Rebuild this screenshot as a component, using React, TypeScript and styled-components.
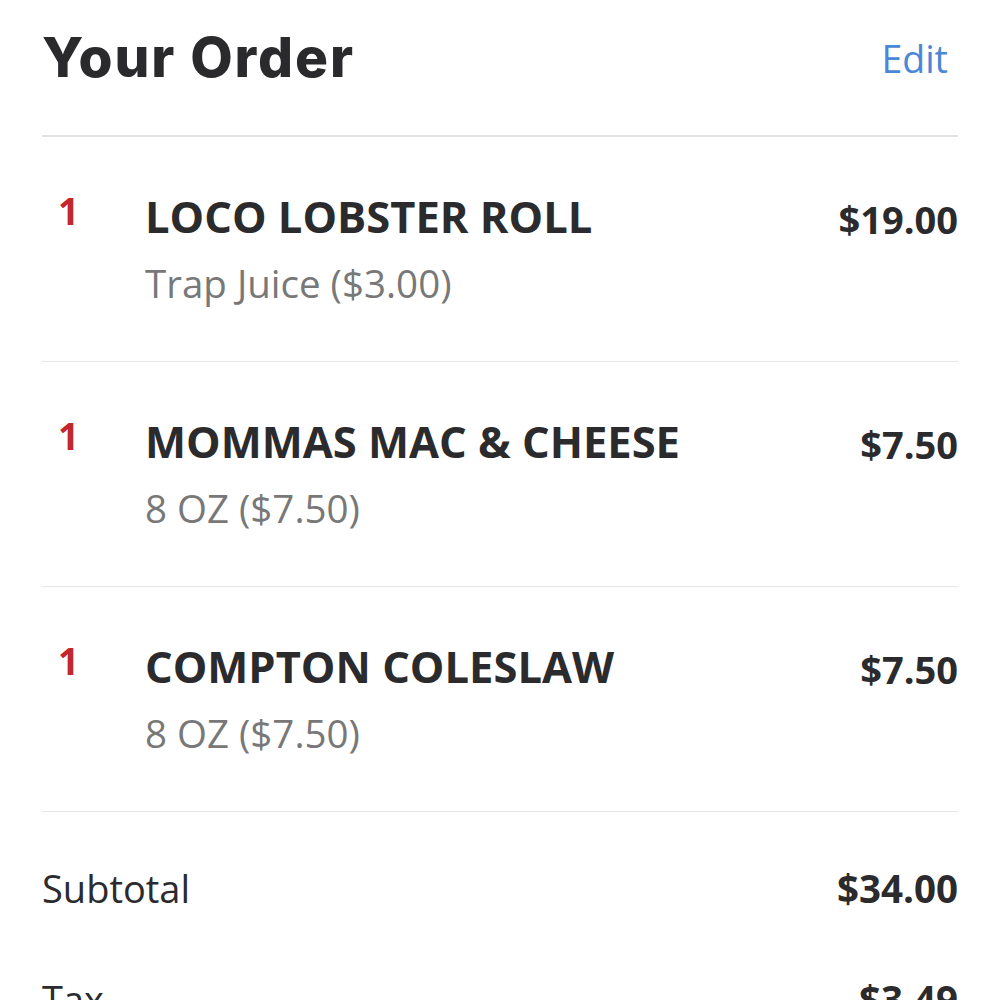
import React from "react";
import styled, { createGlobalStyle } from "styled-components";

const Global = createGlobalStyle`
  html, body { margin: 0; padding: 0; background: #ffffff; }
  body { font-family: "Open Sans", "Liberation Sans", sans-serif; color: #2b2b2d; }
`;

const Page = styled.div`
  width: 1000px;
  height: 1000px;
  overflow: hidden;
  box-sizing: border-box;
  padding: 0 42px;
`;

const Header = styled.div`
  display: flex;
  justify-content: space-between;
  align-items: flex-start;
  height: 137px;
  border-bottom: 2px solid #e3e3e3;
  box-sizing: border-box;
`;

const Title = styled.h1`
  margin: 0;
  padding-top: 22px;
  font-family: "Inter", sans-serif;
  font-weight: 800;
  font-size: 55px;
  line-height: 70px;
  letter-spacing: 1.9px;
  color: #2a2a2c;
`;

const EditLink = styled.a`
  padding-top: 37px;
  padding-right: 10px;
  font-size: 37.5px;
  line-height: 44px;
  color: #4a87d6;
  text-decoration: none;
`;

const ItemRow = styled.div`
  display: grid;
  grid-template-columns: 103px 1fr auto;
  height: 225px;
  box-sizing: border-box;
  border-bottom: 1px solid #e6e6e6;
  padding-top: 55px;
`;

const Qty = styled.div`
  padding-left: 16px;
  font-weight: 700;
  font-size: 37px;
  line-height: 38px;
  color: #c1272d;
`;

const ItemInfo = styled.div`
  display: flex;
  flex-direction: column;
  gap: 18px;
`;

const ItemName = styled.div`
  font-weight: 700;
  font-size: 43.5px;
  line-height: 50px;
  color: #2b2b2d;
`;

const ItemSub = styled.div`
  font-weight: 400;
  font-size: 38.5px;
  line-height: 46px;
  color: #787878;
`;

const Price = styled.div`
  font-weight: 700;
  font-size: 38px;
  line-height: 46px;
  padding-top: 4px;
  color: #2b2b2d;
`;

const TotalRow = styled.div`
  display: flex;
  justify-content: space-between;
  align-items: flex-start;
  height: 111px;
  padding-top: 51px;
  box-sizing: border-box;
`;

const TotalLabel = styled.div`
  font-size: 38px;
  line-height: 50px;
  color: #2b2b2d;
`;

const TotalValue = styled.div`
  font-weight: 700;
  font-size: 38.5px;
  line-height: 50px;
  color: #2b2b2d;
`;

const items = [
  { qty: 1, name: "LOCO LOBSTER ROLL", sub: "Trap Juice ($3.00)", price: "$19.00" },
  { qty: 1, name: "MOMMAS MAC & CHEESE", sub: "8 OZ ($7.50)", price: "$7.50" },
  { qty: 1, name: "COMPTON COLESLAW", sub: "8 OZ ($7.50)", price: "$7.50" },
];

export default function App() {
  return (
    <>
      <Global />
      <Page>
        <Header>
          <Title>Your Order</Title>
          <EditLink>Edit</EditLink>
        </Header>
        {items.map((it) => (
          <ItemRow key={it.name}>
            <Qty>{it.qty}</Qty>
            <ItemInfo>
              <ItemName>{it.name}</ItemName>
              <ItemSub>{it.sub}</ItemSub>
            </ItemInfo>
            <Price>{it.price}</Price>
          </ItemRow>
        ))}
        <TotalRow>
          <TotalLabel>Subtotal</TotalLabel>
          <TotalValue>$34.00</TotalValue>
        </TotalRow>
        <TotalRow>
          <TotalLabel>Tax</TotalLabel>
          <TotalValue>$3.49</TotalValue>
        </TotalRow>
      </Page>
    </>
  );
}
